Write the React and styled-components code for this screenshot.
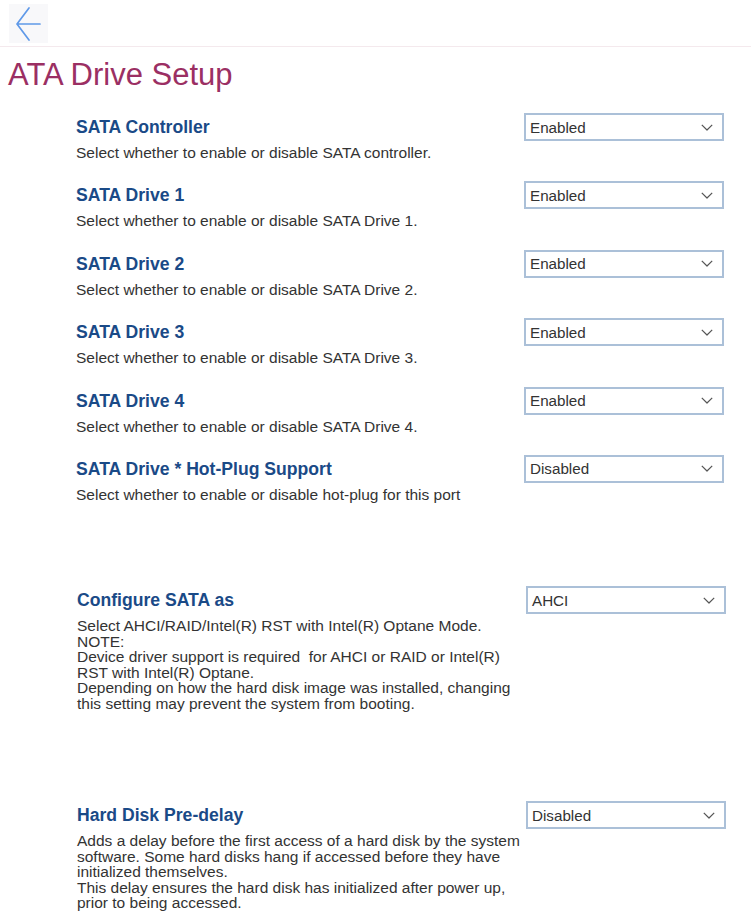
import React from "react";
import styled, { createGlobalStyle } from "styled-components";

//settings shown on the page, gap = extra space above the row
const SETTINGS = [
  {
    title: "SATA Controller",
    help: ["Select whether to enable or disable SATA controller."],
    value: "Enabled",
  },
  {
    title: "SATA Drive 1",
    help: ["Select whether to enable or disable SATA Drive 1."],
    value: "Enabled",
  },
  {
    title: "SATA Drive 2",
    help: ["Select whether to enable or disable SATA Drive 2."],
    value: "Enabled",
  },
  {
    title: "SATA Drive 3",
    help: ["Select whether to enable or disable SATA Drive 3."],
    value: "Enabled",
  },
  {
    title: "SATA Drive 4",
    help: ["Select whether to enable or disable SATA Drive 4."],
    value: "Enabled",
  },
  {
    title: "SATA Drive * Hot-Plug Support",
    help: ["Select whether to enable or disable hot-plug for this port"],
    value: "Disabled",
  },
  {
    title: "Configure SATA as",
    help: [
      "Select AHCI/RAID/Intel(R) RST with Intel(R) Optane Mode.",
      "NOTE:",
      "Device driver support is required  for AHCI or RAID or Intel(R)",
      "RST with Intel(R) Optane.",
      "Depending on how the hard disk image was installed, changing",
      "this setting may prevent the system from booting.",
    ],
    value: "AHCI",
    gap: 84,
    shift: true,
  },
  {
    title: "Hard Disk Pre-delay",
    help: [
      "Adds a delay before the first access of a hard disk by the system",
      "software. Some hard disks hang if accessed before they have",
      "initialized themselves.",
      "This delay ensures the hard disk has initialized after power up,",
      "prior to being accessed.",
    ],
    value: "Disabled",
    gap: 90,
    shift: true,
  },
];

const App = () => {
  return (
    <>
      <GlobalStyle />
      <TopBar>
        <BackButton aria-label="Back">
          <svg width="27" height="36" viewBox="0 0 27 36" fill="none">
            <path
              d="M25 18H2M14 2L2 18l12 16"
              stroke="#5f99e8"
              strokeWidth="1.7"
              strokeLinecap="round"
              strokeLinejoin="round"
            />
          </svg>
        </BackButton>
      </TopBar>
      <PageTitle>ATA Drive Setup</PageTitle>
      <SettingsList>
        {SETTINGS.map((item) => (
          <SettingRow key={item.title} $gap={item.gap} $shift={item.shift}>
            <SettingTitle>{item.title}</SettingTitle>
            <SelectBox type="button">
              <span>{item.value}</span>
              <svg width="12" height="7" viewBox="0 0 12 7" fill="none">
                <path
                  d="M0.8 0.8L6 6l5.2-5.2"
                  stroke="#555"
                  strokeWidth="1.2"
                  strokeLinejoin="round"
                />
              </svg>
            </SelectBox>
            <SettingHelp>
              {item.help.map((line, i) => (
                <HelpLine key={i}>{line}</HelpLine>
              ))}
            </SettingHelp>
          </SettingRow>
        ))}
      </SettingsList>
    </>
  );
};

//* --------- styles -------
const GlobalStyle = createGlobalStyle`
  body {
    margin: 0;
    background: #fff;
    font-family: "Liberation Sans", Arial, sans-serif;
  }
`;

const TopBar = styled.header`
  height: 47px;
  border-bottom: 1px solid #f4e9ed;
  padding: 4px 0 0 9px;
  box-sizing: border-box;
`;

const BackButton = styled.button`
  width: 39px;
  height: 39px;
  border: none;
  padding: 0;
  background: #f8f8fa;
  display: flex;
  align-items: center;
  justify-content: center;
  cursor: pointer;
`;

const PageTitle = styled.h1`
  margin: 11px 0 0 8px;
  font-size: 31px;
  line-height: 34px;
  font-weight: 400;
  color: #9b2f63;
`;

const SettingsList = styled.div`
  margin-top: 21px;
  padding: 0 27px 30px 76px;
`;

const SettingRow = styled.section`
  display: grid;
  grid-template-columns: 1fr 200px;
  column-gap: 20px;
  margin-top: ${(p) => (p.$gap ? `${p.$gap}px` : "20.9px")};
  margin-right: ${(p) => (p.$shift ? "-2px" : "0")};
  padding-left: ${(p) => (p.$shift ? "1px" : "0")};
  &:first-child {
    margin-top: 0;
  }
`;

const SettingTitle = styled.h2`
  margin: 0;
  font-size: 17.6px;
  line-height: 28px;
  font-weight: 700;
  color: #1a4a87;
`;

const SelectBox = styled.button`
  height: 28px;
  box-sizing: border-box;
  border: 2px solid #abc0d8;
  background: #fff;
  padding: 0 9px 0 4px;
  display: flex;
  align-items: center;
  justify-content: space-between;
  font-family: inherit;
  font-size: 15.2px;
  color: #333;
  cursor: pointer;
`;

const SettingHelp = styled.div`
  grid-column: 1 / -1;
  margin-top: 4px;
  font-size: 15.5px;
  line-height: 15.5px;
  color: #333;
`;

const HelpLine = styled.div`
  white-space: pre;
`;

export default App;
